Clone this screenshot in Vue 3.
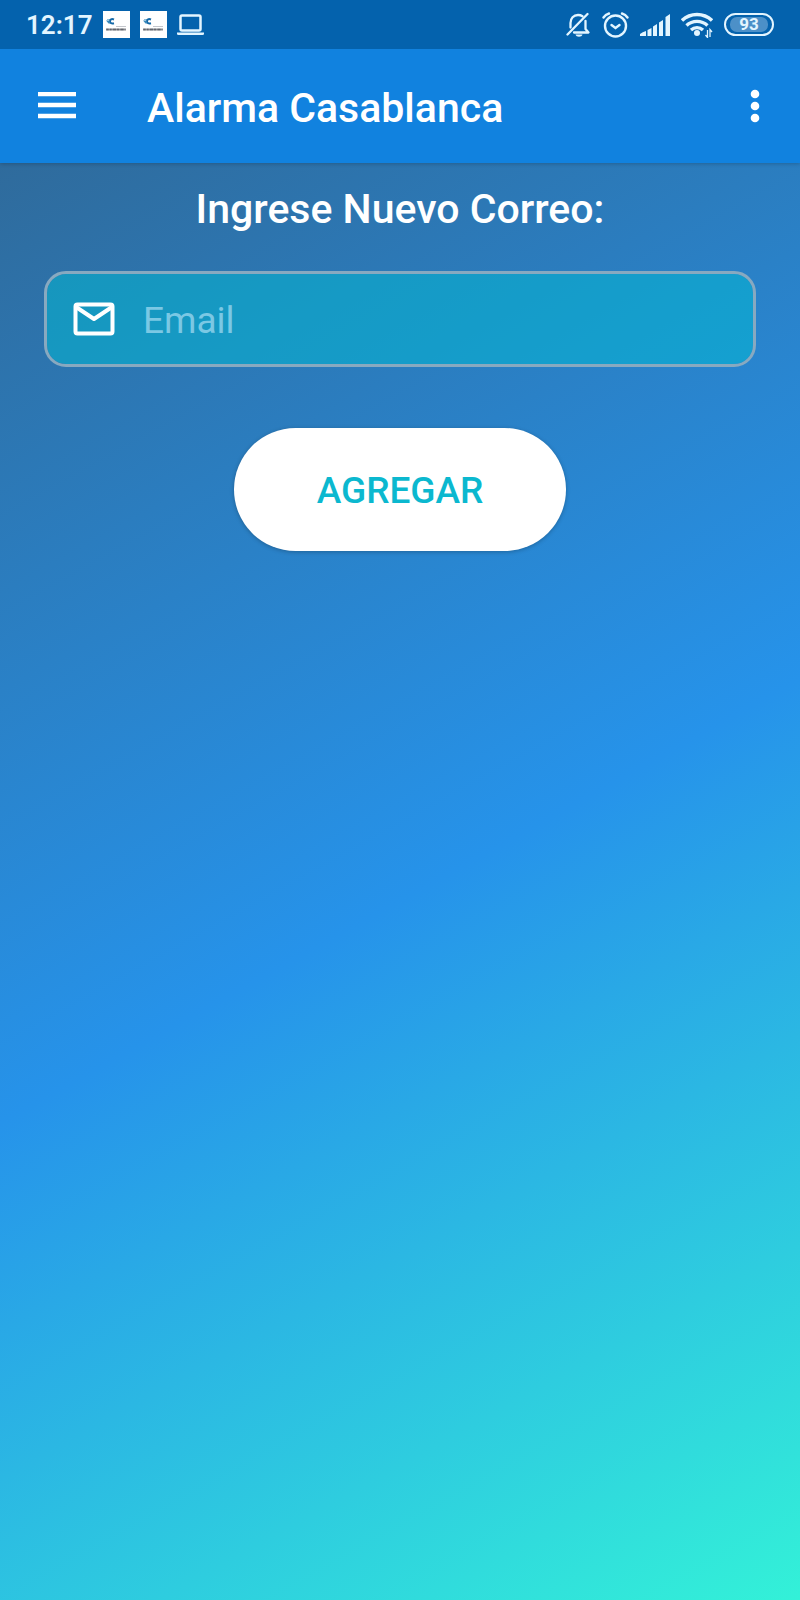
<script setup>
import { ref } from 'vue'

const email = ref('')
const notifications = [1, 2]
</script>

<template>
  <div class="screen">
    <header>
      <div class="status">
        <div class="status-left">
          <span class="clock">12:17</span>
          <svg v-for="n in notifications" :key="n" class="thumb" viewBox="0 0 27 27" aria-hidden="true">
            <rect width="27" height="27" fill="#fff" />
            <path d="M4 8.500h3" stroke="#8fc0dc" stroke-width="1" />
            <path d="M11 8.500c-2.500-1-4 0-4 1.800s1.500 2.600 4 2" fill="none" stroke="#1469a8" stroke-width="2" />
            <path d="M3 9.500h3l1.500 3h-2z" fill="#3b8abc" />
            <path d="M13 15.500h10" stroke="#c3c6cc" stroke-width="1" />
            <path d="M3 18.500h20" stroke="#8a8c92" stroke-width="2" />
            <path d="M3.500 18.500h2M7 18.500h1.500M10 18.500h3M14 18.500h2M17.500 18.500h3" stroke="#62656c" stroke-width="1.500" />
          </svg>
          <svg class="laptop" viewBox="0 0 27 22" aria-hidden="true">
            <rect x="3.500" y="1.500" width="20" height="15" rx="1.500" fill="none" stroke="#e3f5ff" stroke-width="2.500" />
            <path d="M0 18.500h27v1.500q0 1-1.500 1h-24q-1.500 0-1.500-1z" fill="#e3f5ff" />
          </svg>
        </div>
        <div class="status-right">
          <svg class="bell" viewBox="0 0 25 26" aria-hidden="true">
            <g fill="none" stroke="#e3f5ff" stroke-width="2.300" stroke-linecap="round" stroke-linejoin="round">
              <path d="M4.500 15.500V11c0-4.500 3-8 7.500-8 1.800 0 3.300.5 4.500 1.300" />
              <path d="M19.500 9v8l3 3.500H8" />
              <path d="M1.500 22.500L21.500 2" />
            </g>
            <path d="M9.500 22.500h7c-.7 3-6.300 3-7 0z" fill="#e3f5ff" />
          </svg>
          <svg class="alarm" viewBox="0 0 27 26" aria-hidden="true">
            <g fill="none" stroke="#e3f5ff" stroke-width="2.400" stroke-linecap="round">
              <circle cx="13.500" cy="14" r="10.500" />
              <path d="M9.500 13l4 3 4-3" />
              <path d="M1.500 5.500q2-3 5.500-4M20 1.500q3.500 1 5.500 4" />
            </g>
          </svg>
          <svg class="signal" viewBox="0 0 30 22" aria-hidden="true">
            <path d="M0 22v-2q2.500-2 6-3V22zM7.500 16l4-2v8h-4zM13 12.500l4-2.500V22h-4zM19 8.500l4-2.500V22h-4zM25.500 3l4.500-3v22h-4.500z" fill="#e3f5ff" />
          </svg>
          <svg class="wifi" viewBox="0 0 32 26" aria-hidden="true">
            <g fill="none" stroke="#e3f5ff" stroke-width="3.400">
              <path d="M1 8.500C9.500.5 22.500.5 31 8.500" />
              <path d="M5.500 13.500c6-5.500 15-5.500 21 0" />
              <path d="M10 18c3.500-3.200 8.500-3.200 12 0" />
            </g>
            <circle cx="16" cy="21" r="3" fill="#e3f5ff" />
            <path d="M26.500 18v7.500l-2-2.500M29 25v-7.500l2 2.500" fill="none" stroke="#e3f5ff" stroke-width="1.300" />
          </svg>
          <span class="battery"><span class="level">93</span></span>
        </div>
      </div>
      <div class="bar">
        <button class="icon-button menu" type="button" aria-label="Menú">
          <svg viewBox="0 0 38 28"><path d="M0 2h38M0 13h38M0 24h38" stroke="#fff" stroke-width="4.500" /></svg>
        </button>
        <h1>Alarma Casablanca</h1>
        <button class="icon-button more" type="button" aria-label="Más opciones">
          <svg viewBox="0 0 10 34" fill="#fff">
            <circle cx="5" cy="5" r="4.300" /><circle cx="5" cy="17" r="4.300" /><circle cx="5" cy="29" r="4.300" />
          </svg>
        </button>
      </div>
    </header>
    <main>
      <form @submit.prevent>
        <label class="heading" for="email">Ingrese Nuevo Correo:</label>
        <div class="field">
          <svg viewBox="0 0 42 34" aria-hidden="true">
            <g fill="none" stroke="#fff" stroke-width="4" stroke-linejoin="round">
              <rect x="2.500" y="2.500" width="37" height="29" rx="2" />
              <path d="M3 5l18 12L39 5" />
            </g>
          </svg>
          <input id="email" v-model="email" type="email" placeholder="Email" />
        </div>
        <button class="submit" type="submit">AGREGAR</button>
      </form>
    </main>
  </div>
</template>

<style>
body {
  margin: 0;
}
</style>

<style scoped>
.screen {
  display: flex;
  flex-direction: column;
  min-height: 100vh;
  font-family: Roboto, "Noto Sans", sans-serif;
  color: #fff;
}
header {
  position: relative;
  background: #1182df;
  box-shadow: 0 1px 4px rgba(0, 0, 0, 0.2);
}
.status {
  display: flex;
  justify-content: space-between;
  align-items: center;
  height: 49px;
  padding: 0 26px;
  background: #0462ad;
  color: #e3f5ff;
}
.status-left,
.status-right {
  display: flex;
  align-items: center;
}
.status-left {
  gap: 10px;
}
.status-right {
  gap: 11px;
}
.status svg {
  display: block;
}
.clock {
  font-size: 26px;
  line-height: 32px;
  font-weight: 600;
}
.thumb {
  width: 27px;
  height: 27px;
}
.laptop {
  width: 27px;
  height: 22px;
}
.bell {
  width: 25px;
  height: 26px;
}
.alarm {
  width: 27px;
  height: 26px;
}
.signal {
  width: 30px;
  height: 22px;
}
.wifi {
  width: 32px;
  height: 26px;
}
.battery {
  box-sizing: border-box;
  width: 50px;
  height: 23px;
  padding: 2px 4px;
  border: 2px solid #e3f5ff;
  border-radius: 12px;
}
.level {
  display: block;
  border-radius: 7px;
  background: #4c90c8;
  font-size: 17px;
  line-height: 15px;
  font-weight: 700;
  text-align: center;
}
.bar {
  display: flex;
  align-items: center;
  height: 114px;
  padding: 0 30px;
}
.icon-button {
  display: flex;
  align-items: center;
  justify-content: center;
  height: 64px;
  padding: 0 8px;
  border: 0;
  background: none;
}
.menu svg {
  width: 38px;
  height: 28px;
}
.more {
  padding: 0 10px;
}
.more svg {
  width: 10px;
  height: 34px;
}
h1 {
  flex: 1;
  margin: 4px 0 0 63px;
  font-size: 41px;
  line-height: 48px;
  font-weight: 500;
}
main {
  flex: 1;
  padding: 22px 44px;
  background: linear-gradient(151deg, #2f6b9c 0%, #2693ea 51%, #33f1d8 100%);
}
form {
  display: flex;
  flex-direction: column;
  align-items: center;
}
.heading {
  font-size: 41px;
  line-height: 48px;
  font-weight: 500;
}
.field {
  box-sizing: border-box;
  display: flex;
  align-items: center;
  align-self: stretch;
  gap: 28px;
  height: 96px;
  margin-top: 38px;
  padding: 0 26px;
  border: 3px solid #88a9c0;
  border-radius: 22px;
  background: rgba(0, 188, 212, 0.5);
  background-clip: padding-box;
}
.field svg {
  flex: none;
  width: 42px;
  height: 34px;
}
input {
  flex: 1;
  min-width: 0;
  padding: 4px 0 0;
  border: 0;
  outline: 0;
  background: none;
  color: #fff;
  font-family: inherit;
  font-size: 37px;
  line-height: 44px;
}
input::placeholder {
  color: #7bc8e4;
  opacity: 1;
}
.submit {
  height: 123px;
  margin-top: 61px;
  padding: 2px 83px 0;
  border: 0;
  border-radius: 62px;
  background: #fff;
  box-shadow: 0 1px 4px rgba(0, 0, 0, 0.25);
  color: #0bb8cf;
  font-family: inherit;
  font-size: 37px;
  line-height: 44px;
  font-weight: 500;
}
</style>
